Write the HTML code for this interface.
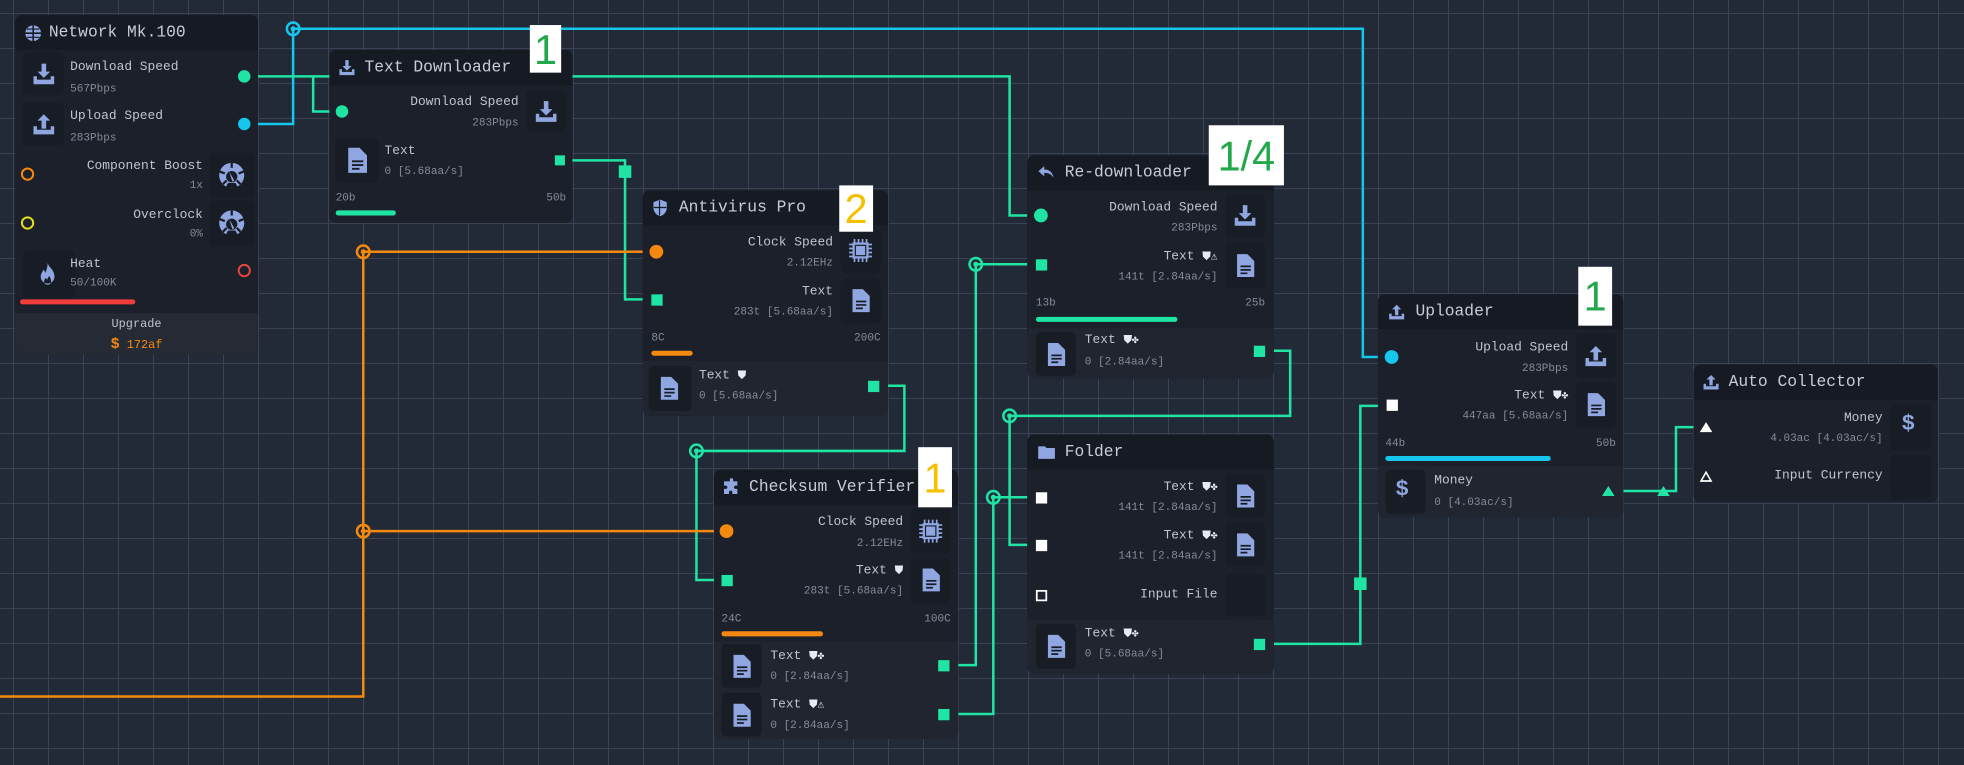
<!DOCTYPE html>
<html><head><meta charset="utf-8"><style>
*{margin:0;padding:0;box-sizing:border-box}
html,body{width:1964px;height:765px;overflow:hidden}
body{background-color:#222a38;background-image:linear-gradient(#3a4254 1px,transparent 1px),linear-gradient(90deg,#3a4254 1px,transparent 1px);background-size:35px 35px;background-position:13px 13px;font-family:"Liberation Mono",monospace}
#w{position:absolute;left:0;top:0;width:1568px;height:611px;transform:scale(1.2526);transform-origin:0 0}
.n{position:absolute;background:#1b202a;border-radius:6px;overflow:hidden}
.hd{position:absolute;left:0;right:0;top:0;height:28px;background:#161a22}
.sec{position:absolute;background:#20252f}
.b{position:absolute;background:#181c25;border-radius:4px}
.t{position:absolute;white-space:nowrap;color:#bfc4cd;font-size:10.3px;line-height:12px}
.s{color:#868c98;font-size:8.8px}
.ti{font-size:13px;line-height:14px;color:#c8ccd4}
.r{transform:translateX(-100%)}
.c{transform:translateX(-50%)}
svg.i{position:absolute;fill:#8fa6e0}
.lab{position:absolute;background:#fff;font-family:"Liberation Sans",sans-serif;font-size:33px;line-height:1;display:flex;align-items:center;justify-content:center}
.bar{position:absolute;height:4px;border-radius:2px}
.em{font-size:9px;color:#e6ebf2}
</style></head><body>
<svg width="0" height="0" style="position:absolute">
<defs>
<symbol id="dl" viewBox="0 0 24 24"><path d="M3 14h3v3h12v-3h3v7H3z M10 3h4v7h3.5L12 15.5 6.5 10H10z"/></symbol>
<symbol id="ul" viewBox="0 0 24 24"><path d="M3 14h3v3h12v-3h3v7H3z M10 16h4V9h3.5L12 3.5 6.5 9H10z"/></symbol>
<symbol id="doc" viewBox="0 0 24 24"><path d="M5 2h9l6 6v14H5z M8 12v1.5h9V12z M8 15v1.5h9V15z M8 18v1.5h6V18z" fill-rule="evenodd"/></symbol>
<symbol id="cpu" viewBox="0 0 24 24"><path d="M5 5h14v14H5z M7 7v10h10V7z M6 2h1.5v3H6zM9.5 2H11v3H9.5zM13 2h1.5v3H13zM16.5 2H18v3h-1.5zM6 19h1.5v3H6zM9.5 19H11v3H9.5zM13 19h1.5v3H13zM16.5 19H18v3h-1.5zM2 6h3v1.5H2zM2 9.5h3V11H2zM2 13h3v1.5H2zM2 16.5h3V18H2zM19 6h3v1.5h-3zM19 9.5h3V11h-3zM19 13h3v1.5h-3zM19 16.5h3V18h-3z" fill-rule="evenodd"/><rect x="8" y="8" width="8" height="8"/></symbol>
<symbol id="gau" viewBox="0 0 24 24"><circle cx="12" cy="12" r="10"/><circle cx="12" cy="13" r="4.5" fill="#181c25"/><path d="M12 2v4M2.5 9l4 1.5M21.5 9l-4 1.5M5 19l3-3M19 19l-3-3" stroke="#181c25" stroke-width="1.8"/><path d="M10 9l4 7-1.5 1z" fill="#8fa6e0"/><path d="M7 22h10l-2-4H9z" fill="#181c25"/></symbol>
<symbol id="fire" viewBox="0 0 24 24"><path d="M12 2c1 4 6 6 6 12a6 6 0 0 1-12 0c0-3 2-4 2-6 2 1 2 3 2 3 1-3 2-5 2-9z M12 21c-2 0-3-1-3-3 0-1.5 1-2 1.5-3 .5 1 1 1.5 1.5 1.5 0-1 .5-2 1.5-3 1 2 1.5 3 1.5 4.5 0 2-1 3-3 3z" fill-rule="evenodd"/></symbol>
<symbol id="glob" viewBox="0 0 24 24"><circle cx="12" cy="12" r="10"/><path d="M2 11h20v2H2zM11 2h2v20h-2zM4 6h16v1.5H4zM4 16.5h16V18H4z" fill="#161a22"/></symbol>
<symbol id="sh" viewBox="0 0 24 24"><path d="M12 2l8 3v7c0 5-4 9-8 10-4-1-8-5-8-10V5z"/><path d="M11.3 3v18M4.5 11.5h15" stroke="#161a22" stroke-width="1.4"/></symbol>
<symbol id="puz" viewBox="0 0 24 24"><path d="M10 3a2 2 0 0 1 4 0v2h5v5h-2a2 2 0 0 0 0 4h2v6h-6v-2a2 2 0 0 0-4 0v2H3v-6h2a2 2 0 0 0 0-4H3V5h7z"/></symbol>
<symbol id="fold" viewBox="0 0 24 24"><path d="M2 5h8l2 2h10v13H2z"/></symbol>
<symbol id="rep" viewBox="0 0 24 24"><path d="M10 4L3 10l7 6v-4c5 0 8 1 11 6-1-6-4-10-11-10z"/></symbol>
</defs></svg>
<div id="w">
<svg style="position:absolute;left:0;top:0" width="1568" height="611" fill="none" stroke-width="2">
<g stroke="#17c6ec"><path d="M195 99H234V23H1088V285H1111"/></g>
<circle cx="234" cy="23" r="5" stroke="#17c6ec"/><circle cx="234" cy="23" r="2" fill="#17c6ec"/>
<g stroke="#20e4a4">
<path d="M195 61H806V172H831"/><path d="M250 61V89H273"/>
<path d="M447 128H499V239H524"/>
<path d="M697 308H722V360H556V463H580"/>
<path d="M753 531H779V211H831"/>
<path d="M753 570H793V397H831"/>
<path d="M1005 280H1030V332H806V435H831"/>
<path d="M1005 514H1086V324H1111"/>
<path d="M1284 392H1338V341H1362"/>
</g>
<g fill="#20e4a4"><rect x="494" y="132" width="10" height="10"/><rect x="1081" y="461" width="10" height="10"/><path d="M1323 396l5-8 5 8z"/></g>
<g stroke="#20e4a4"><circle cx="556" cy="360" r="5"/><circle cx="779" cy="211" r="5"/><circle cx="793" cy="397" r="5"/><circle cx="806" cy="332" r="5"/></g>
<g fill="#20e4a4"><circle cx="556" cy="360" r="2"/><circle cx="779" cy="211" r="2"/><circle cx="793" cy="397" r="2"/><circle cx="806" cy="332" r="2"/></g>
<g stroke="#f5890f"><path d="M0 556H290V201H524"/><path d="M290 424H580"/><circle cx="290" cy="201" r="5"/><circle cx="290" cy="424" r="5"/></g>
<g fill="#f5890f"><circle cx="290" cy="201" r="2"/><circle cx="290" cy="424" r="2"/></g>
</svg>

<div class="n" style="left:12px;top:12px;width:194px;height:271px"><div class="hd"></div><div class="sec" style="left:0;right:0;top:238px;bottom:0;background:#252a35"></div></div>
<svg class="i" style="left:19px;top:19px" width="15" height="15"><use href="#glob"/></svg>
<div class="t ti" style="left:39px;top:19px">Network Mk.100</div>
<div class="b" style="left:18px;top:42px;width:33px;height:34px"></div><svg class="i" style="left:24px;top:48px" width="22" height="22"><use href="#dl"/></svg>
<div class="t" style="left:56px;top:48px">Download Speed</div><div class="t s" style="left:56px;top:65px">567Pbps</div>
<div class="b" style="left:18px;top:82px;width:33px;height:34px"></div><svg class="i" style="left:24px;top:88px" width="22" height="22"><use href="#ul"/></svg>
<div class="t" style="left:56px;top:87px">Upload Speed</div><div class="t s" style="left:56px;top:104px">283Pbps</div>
<div class="b" style="left:167px;top:122px;width:36px;height:36px"></div><svg class="i" style="left:173px;top:128px" width="24" height="24"><use href="#gau"/></svg>
<div class="t r" style="left:162px;top:127px">Component Boost</div><div class="t s r" style="left:162px;top:142px">1x</div>
<div class="b" style="left:167px;top:160px;width:36px;height:37px"></div><svg class="i" style="left:173px;top:166px" width="24" height="24"><use href="#gau"/></svg>
<div class="t r" style="left:162px;top:166px">Overclock</div><div class="t s r" style="left:162px;top:181px">0%</div>
<div class="b" style="left:18px;top:200px;width:42px;height:38px"></div><svg class="i" style="left:27px;top:207px" width="22" height="24"><use href="#fire"/></svg>
<div class="t" style="left:56px;top:205px">Heat</div><div class="t s" style="left:56px;top:220px">50/100K</div>
<div class="bar" style="left:16px;top:239px;width:92px;background:#f23d3d"></div>
<div class="t c" style="left:109px;top:253px;font-size:9.5px">Upgrade</div>
<div class="t c" style="left:109px;top:269px;color:#f5890f;font-size:9.5px"><b style="font-size:12px">$</b> 172af</div>
<svg style="position:absolute;left:0;top:0" width="220" height="230" fill="none" stroke-width="1.6"><circle cx="195" cy="61" r="5" fill="#20e4a4"/><circle cx="195" cy="99" r="5" fill="#17c6ec"/><circle cx="22" cy="139" r="4.5" stroke="#f5890f"/><circle cx="22" cy="178" r="4.5" stroke="#e3e01b"/><circle cx="195" cy="216" r="4.5" stroke="#e5443f"/></svg>

<div class="n" style="left:263px;top:40px;width:194px;height:138px"><div class="hd"></div></div>
<svg class="i" style="left:269px;top:46px" width="16" height="16"><use href="#dl"/></svg>
<div class="t ti" style="left:291px;top:47px">Text Downloader</div>
<div class="t r" style="left:414px;top:76px">Download Speed</div><div class="t s r" style="left:414px;top:92px">283Pbps</div>
<div class="b" style="left:420px;top:72px;width:32px;height:34px"></div><svg class="i" style="left:425px;top:78px" width="22" height="22"><use href="#dl"/></svg>
<div class="b" style="left:268px;top:110px;width:34px;height:36px"></div><svg class="i" style="left:273px;top:116px" width="24" height="24"><use href="#doc"/></svg>
<div class="t" style="left:307px;top:115px">Text</div><div class="t s" style="left:307px;top:131px">0 [5.68aa/s]</div>
<div class="t s" style="left:268px;top:152px">20b</div><div class="t s r" style="left:452px;top:152px">50b</div>
<div class="bar" style="left:268px;top:168px;width:48px;background:#20e4a4"></div>

<div class="n" style="left:513px;top:152px;width:196px;height:180px"><div class="hd"></div><div class="sec" style="left:0;right:0;top:136px;bottom:0"></div></div>
<svg class="i" style="left:519px;top:158px" width="16" height="16"><use href="#sh"/></svg>
<div class="t ti" style="left:542px;top:159px">Antivirus Pro</div>
<div class="t r" style="left:665px;top:188px">Clock Speed</div><div class="t s r" style="left:665px;top:204px">2.12EHz</div>
<div class="b" style="left:671px;top:183px;width:32px;height:35px"></div><svg class="i" style="left:676px;top:189px" width="22" height="22"><use href="#cpu"/></svg>
<div class="t r" style="left:665px;top:227px">Text</div><div class="t s r" style="left:665px;top:243px">283t [5.68aa/s]</div>
<div class="b" style="left:671px;top:222px;width:32px;height:36px"></div><svg class="i" style="left:676px;top:228px" width="22" height="24"><use href="#doc"/></svg>
<div class="t s" style="left:520px;top:264px">8C</div><div class="t s r" style="left:703px;top:264px">200C</div>
<div class="bar" style="left:520px;top:280px;width:33px;background:#f5890f"></div>
<div class="b" style="left:518px;top:292px;width:34px;height:36px"></div><svg class="i" style="left:523px;top:298px" width="22" height="24"><use href="#doc"/></svg>
<div class="t" style="left:558px;top:294px">Text <span class="em">⛊</span></div><div class="t s" style="left:558px;top:310px">0 [5.68aa/s]</div>

<div class="n" style="left:570px;top:375px;width:195px;height:215px"><div class="hd"></div><div class="sec" style="left:0;right:0;top:137px;bottom:0"></div></div>
<svg class="i" style="left:576px;top:381px" width="16" height="16"><use href="#puz"/></svg>
<div class="t ti" style="left:598px;top:382px">Checksum Verifier</div>
<div class="t r" style="left:721px;top:411px">Clock Speed</div><div class="t s r" style="left:721px;top:428px">2.12EHz</div>
<div class="b" style="left:727px;top:406px;width:32px;height:36px"></div><svg class="i" style="left:732px;top:413px" width="22" height="22"><use href="#cpu"/></svg>
<div class="t r" style="left:721px;top:450px">Text <span class="em">⛊</span></div><div class="t s r" style="left:721px;top:466px">283t [5.68aa/s]</div>
<div class="b" style="left:727px;top:445px;width:32px;height:37px"></div><svg class="i" style="left:732px;top:451px" width="22" height="24"><use href="#doc"/></svg>
<div class="t s" style="left:576px;top:488px">24C</div><div class="t s r" style="left:759px;top:488px">100C</div>
<div class="bar" style="left:576px;top:504px;width:81px;background:#f5890f"></div>
<div class="b" style="left:576px;top:514px;width:32px;height:35px"></div><svg class="i" style="left:581px;top:520px" width="22" height="24"><use href="#doc"/></svg>
<div class="t" style="left:615px;top:518px">Text <span class="em">⛊✤</span></div><div class="t s" style="left:615px;top:534px">0 [2.84aa/s]</div>
<div class="b" style="left:576px;top:553px;width:32px;height:35px"></div><svg class="i" style="left:581px;top:559px" width="22" height="24"><use href="#doc"/></svg>
<div class="t" style="left:615px;top:557px">Text <span class="em">⛊⚠</span></div><div class="t s" style="left:615px;top:573px">0 [2.84aa/s]</div>

<div class="n" style="left:820px;top:124px;width:197px;height:178px"><div class="hd"></div><div class="sec" style="left:0;right:0;top:138px;bottom:0"></div></div>
<svg class="i" style="left:827px;top:130px" width="16" height="16"><use href="#rep"/></svg>
<div class="t ti" style="left:850px;top:131px">Re-downloader</div>
<div class="t r" style="left:972px;top:160px">Download Speed</div><div class="t s r" style="left:972px;top:176px">283Pbps</div>
<div class="b" style="left:978px;top:155px;width:32px;height:35px"></div><svg class="i" style="left:983px;top:161px" width="22" height="22"><use href="#dl"/></svg>
<div class="t r" style="left:972px;top:199px">Text <span class="em">⛊⚠</span></div><div class="t s r" style="left:972px;top:215px">141t [2.84aa/s]</div>
<div class="b" style="left:978px;top:193px;width:32px;height:37px"></div><svg class="i" style="left:983px;top:200px" width="22" height="24"><use href="#doc"/></svg>
<div class="t s" style="left:827px;top:236px">13b</div><div class="t s r" style="left:1010px;top:236px">25b</div>
<div class="bar" style="left:827px;top:253px;width:113px;background:#20e4a4"></div>
<div class="b" style="left:827px;top:265px;width:32px;height:35px"></div><svg class="i" style="left:832px;top:271px" width="22" height="24"><use href="#doc"/></svg>
<div class="t" style="left:866px;top:266px">Text <span class="em">⛊✤</span></div><div class="t s" style="left:866px;top:283px">0 [2.84aa/s]</div>

<div class="n" style="left:820px;top:347px;width:197px;height:191px"><div class="hd"></div><div class="sec" style="left:0;right:0;top:148px;bottom:0"></div></div>
<svg class="i" style="left:827px;top:353px" width="17" height="16"><use href="#fold"/></svg>
<div class="t ti" style="left:850px;top:354px">Folder</div>
<div class="t r" style="left:972px;top:383px">Text <span class="em">⛊✤</span></div><div class="t s r" style="left:972px;top:399px">141t [2.84aa/s]</div>
<div class="b" style="left:978px;top:378px;width:32px;height:35px"></div><svg class="i" style="left:983px;top:384px" width="22" height="24"><use href="#doc"/></svg>
<div class="t r" style="left:972px;top:422px">Text <span class="em">⛊✤</span></div><div class="t s r" style="left:972px;top:438px">141t [2.84aa/s]</div>
<div class="b" style="left:978px;top:417px;width:32px;height:35px"></div><svg class="i" style="left:983px;top:423px" width="22" height="24"><use href="#doc"/></svg>
<div class="t r" style="left:972px;top:469px">Input File</div>
<div class="b" style="left:978px;top:458px;width:32px;height:34px"></div>
<div class="b" style="left:827px;top:498px;width:32px;height:36px"></div><svg class="i" style="left:832px;top:504px" width="22" height="24"><use href="#doc"/></svg>
<div class="t" style="left:866px;top:500px">Text <span class="em">⛊✤</span></div><div class="t s" style="left:866px;top:516px">0 [5.68aa/s]</div>

<div class="n" style="left:1100px;top:235px;width:196px;height:178px"><div class="hd"></div><div class="sec" style="left:0;right:0;top:137px;bottom:0"></div></div>
<svg class="i" style="left:1107px;top:241px" width="16" height="16"><use href="#ul"/></svg>
<div class="t ti" style="left:1130px;top:242px">Uploader</div>
<div class="t r" style="left:1252px;top:272px">Upload Speed</div><div class="t s r" style="left:1252px;top:288px">283Pbps</div>
<div class="b" style="left:1258px;top:266px;width:32px;height:36px"></div><svg class="i" style="left:1263px;top:273px" width="22" height="22"><use href="#ul"/></svg>
<div class="t r" style="left:1252px;top:310px">Text <span class="em">⛊✤</span></div><div class="t s r" style="left:1252px;top:326px">447aa [5.68aa/s]</div>
<div class="b" style="left:1258px;top:305px;width:32px;height:37px"></div><svg class="i" style="left:1263px;top:311px" width="22" height="24"><use href="#doc"/></svg>
<div class="t s" style="left:1106px;top:348px">44b</div><div class="t s r" style="left:1290px;top:348px">50b</div>
<div class="bar" style="left:1106px;top:364px;width:132px;background:#17c6ec"></div>
<div class="b" style="left:1106px;top:375px;width:32px;height:35px"></div><div class="t" style="left:1114px;top:381px;font-size:18px;line-height:20px;color:#8fa6e0;font-weight:bold">$</div>
<div class="t" style="left:1145px;top:378px">Money</div><div class="t s" style="left:1145px;top:395px">0 [4.03ac/s]</div>

<div class="n" style="left:1352px;top:291px;width:195px;height:110px"><div class="hd"></div></div>
<svg class="i" style="left:1358px;top:297px" width="16" height="16"><use href="#ul"/></svg>
<div class="t ti" style="left:1380px;top:298px">Auto Collector</div>
<div class="t r" style="left:1503px;top:328px">Money</div><div class="t s r" style="left:1503px;top:344px">4.03ac [4.03ac/s]</div>
<div class="b" style="left:1509px;top:322px;width:32px;height:38px"></div><div class="t" style="left:1518px;top:329px;font-size:18px;line-height:20px;color:#8fa6e0;font-weight:bold">$</div>
<div class="t r" style="left:1503px;top:374px">Input Currency</div>
<div class="b" style="left:1509px;top:363px;width:32px;height:35px"></div>

<svg style="position:absolute;left:0;top:0" width="1568" height="611">
<circle cx="273" cy="89" r="5" fill="#20e4a4"/><rect x="443" y="124" width="8" height="8" fill="#20e4a4"/>
<circle cx="524" cy="201" r="5.5" fill="#f5890f"/><rect x="520" y="235" width="9" height="9" fill="#20e4a4"/><rect x="693" y="304" width="9" height="9" fill="#20e4a4"/>
<circle cx="580" cy="424" r="5.5" fill="#f5890f"/><rect x="576" y="459" width="9" height="9" fill="#20e4a4"/><rect x="749" y="527" width="9" height="9" fill="#20e4a4"/><rect x="749" y="566" width="9" height="9" fill="#20e4a4"/>
<circle cx="831" cy="172" r="5.5" fill="#20e4a4"/><rect x="827" y="207" width="9" height="9" fill="#20e4a4"/><rect x="1001" y="276" width="9" height="9" fill="#20e4a4"/>
<rect x="827" y="393" width="9" height="9" fill="#fff"/><rect x="827" y="431" width="9" height="9" fill="#fff"/><rect x="827.7" y="471.7" width="7.6" height="7.6" fill="none" stroke="#fff" stroke-width="1.4"/><rect x="1001" y="510" width="9" height="9" fill="#20e4a4"/>
<circle cx="1111" cy="285" r="5.5" fill="#17c6ec"/><rect x="1107" y="319" width="9" height="9" fill="#fff"/><path d="M1279 396l5-8 5 8z" fill="#20e4a4"/>
<path d="M1357 345l5-8 5 8z" fill="#fff"/><path d="M1358 384l4-7 4 7z" fill="none" stroke="#fff" stroke-width="1.3"/>
</svg>

<div class="lab" style="left:423px;top:20px;width:25px;height:38px;color:#21a84a">1</div>
<div class="lab" style="left:670px;top:148px;width:27px;height:37px;color:#f5c000">2</div>
<div class="lab" style="left:965px;top:100px;width:60px;height:48px;color:#21a84a">1/4</div>
<div class="lab" style="left:733px;top:357px;width:27px;height:48px;color:#f5c000">1</div>
<div class="lab" style="left:1260px;top:213px;width:27px;height:47px;color:#21a84a">1</div>
</div>
</body></html>
